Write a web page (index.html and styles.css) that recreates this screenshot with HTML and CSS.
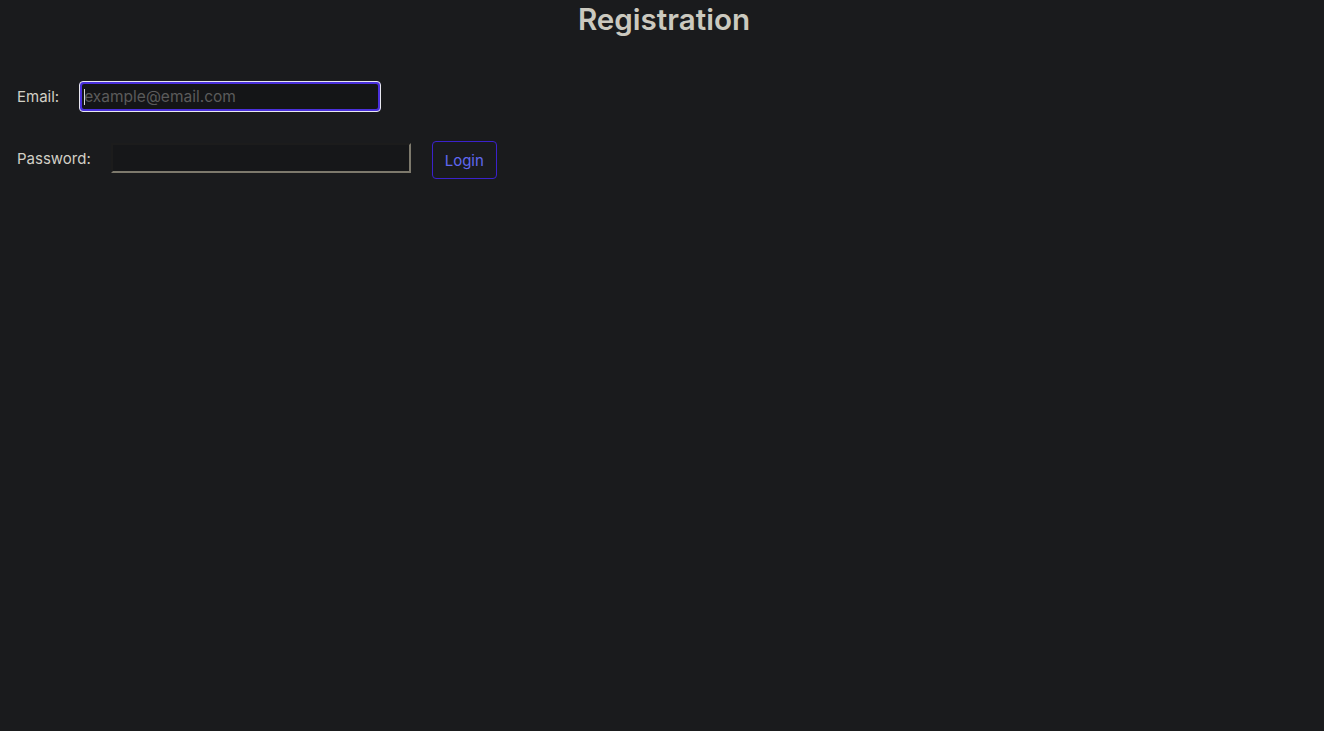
FILE: index.html
```html
<!DOCTYPE html>
<html lang="en">
<head>
<meta charset="utf-8">
<title>Registration</title>
<link rel="stylesheet" href="styles.css">
</head>
<body>
  <h1 class="title">Registration</h1>
  <form class="form">
    <div class="row row-email">
      <label class="label" for="email">Email:</label>
      <div class="email-wrap">
        <input class="input-email" id="email" type="email" placeholder="example@email.com">
        <span class="caret"></span>
      </div>
    </div>
    <div class="row row-password">
      <label class="label label-password" for="password">Password:</label>
      <input class="input-password" id="password" type="password">
      <button class="btn" type="button">Login</button>
    </div>
  </form>
</body>
</html>
```

FILE: styles.css
```css
html, body {
  margin: 0;
  padding: 0;
  background: #1a1b1d;
  height: 100%;
}
body {
  font-family: Inter, "Noto Sans", sans-serif;
  color: #d2d0c6;
}
.title {
  margin: 0;
  padding-top: 1px;
  text-align: center;
  font-size: 29.6px;
  font-weight: 600;
  line-height: 36px;
  color: #cbc9bf;
  padding-left: 4px;
}
.form {
  padding-left: 17px;
  display: flex;
  flex-direction: column;
}
.row {
  display: flex;
  align-items: center;
}
.row-email {
  margin-top: 44px;
  gap: 20px;
}
.row-password {
  margin-top: 29px;
  gap: 20px;
}
.label {
  font-size: 15px;
  color: #d2d0c6;
}
.label-password {
  margin-top: -4px;
}
.email-wrap {
  position: relative;
  width: 302px;
  height: 31px;
  box-sizing: border-box;
  border: 1px solid #e8e8f0;
  border-radius: 4px;
  background: #4a30dc;
  padding: 2px;
}
.input-email {
  display: block;
  width: 100%;
  height: 100%;
  box-sizing: border-box;
  border: none;
  outline: none;
  border-radius: 2px;
  background: #141517;
  color: #d2d0c6;
  font-family: Inter, "Noto Sans", sans-serif;
  font-size: 15.5px;
  padding: 0 0 0 2px;
}
.input-email::placeholder {
  color: #5b5b5b;
}
.caret {
  position: absolute;
  left: 4px;
  top: 7px;
  width: 1px;
  height: 16px;
  background: #d8d8d8;
}
.input-password {
  width: 300px;
  height: 30px;
  box-sizing: border-box;
  border-style: solid;
  border-width: 2px;
  border-color: #1c1c1c #7d796c #7d796c #1c1c1c;
  background: #161719;
  color: #d2d0c6;
  outline: none;
  padding: 0 4px;
  margin-top: -5px;
}
.btn {
  margin-left: 1px;
  width: 65px;
  height: 38px;
  box-sizing: border-box;
  border: 1px solid #3b22cc;
  border-radius: 4px;
  background: #1a1b1d;
  color: #6068f0;
  font-family: Inter, "Noto Sans", sans-serif;
  font-size: 15px;
  padding: 0;
  cursor: pointer;
}
```
